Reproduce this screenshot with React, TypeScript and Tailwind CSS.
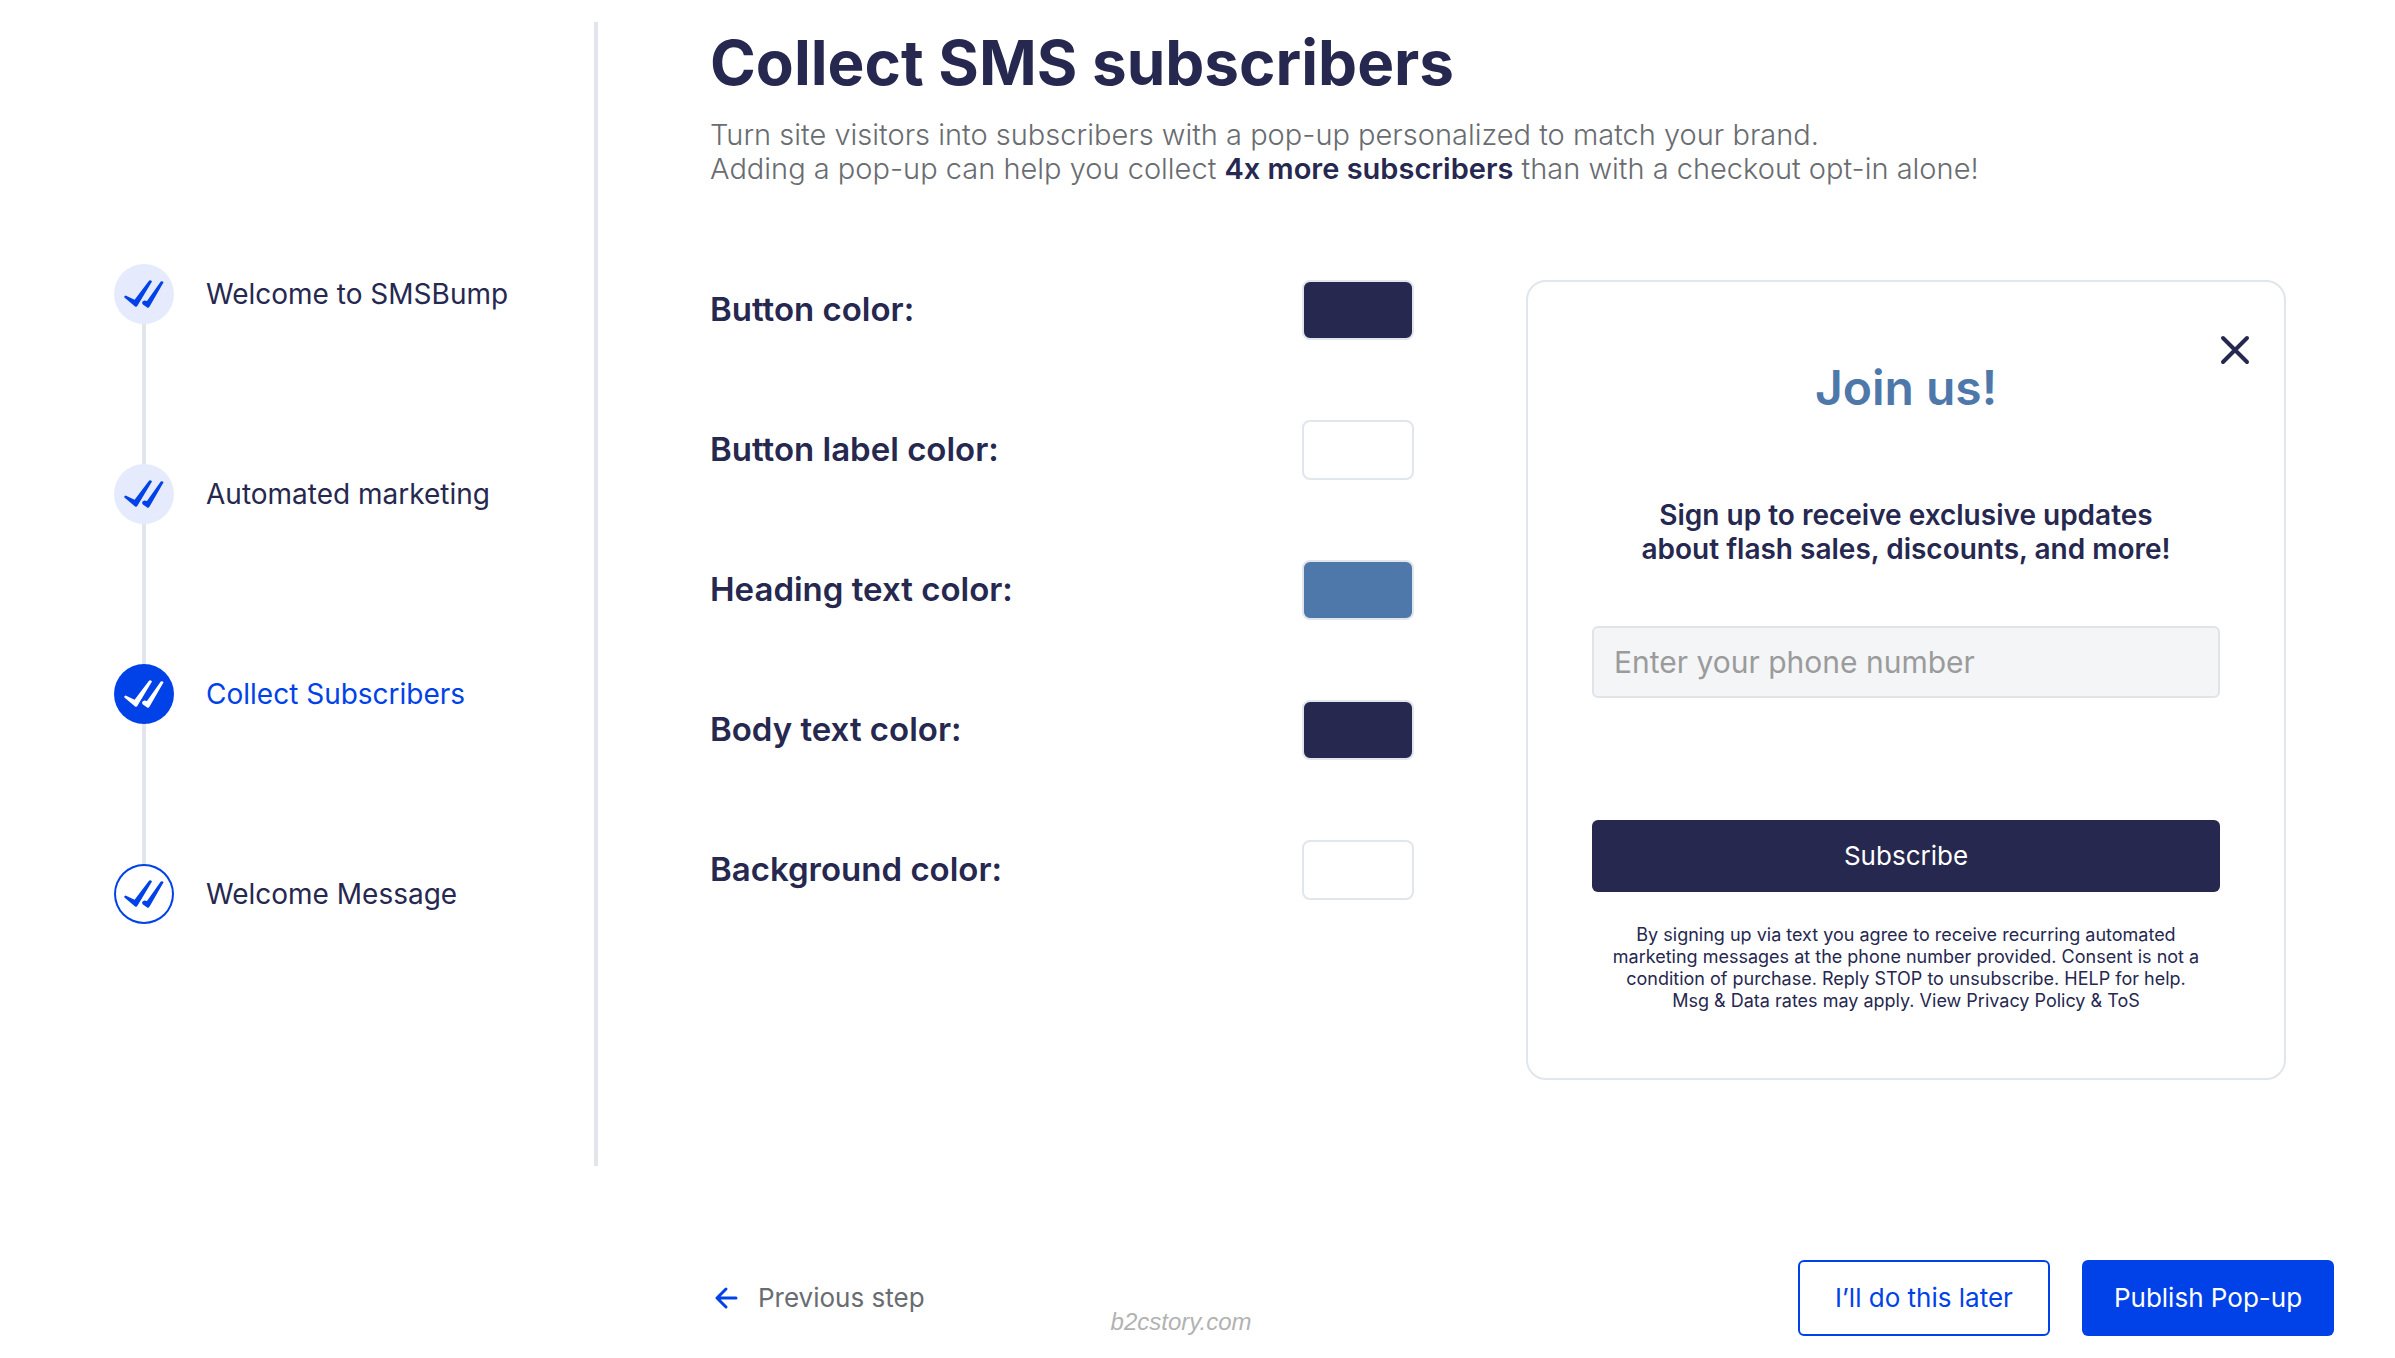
import React from "react";

const INTER = "font-['Inter',sans-serif]";

function DoubleCheck() {
  return (
    <svg viewBox="0 0 60 60" className="size-15" fill="currentColor" aria-hidden="true">
      <path d="M10.400 33.600 Q9.600 32.200 11.600 31.600 L20.600 35.800 L35 16.800 Q36.400 15.700 38 17.400 L23.600 41.600 Q22.400 43.600 20.800 42.200 Z" />
      <path d="M28 38.600 Q28.400 36.600 30.600 36.400 L33 37 L46.800 17.600 Q48.200 16.600 49.600 18.200 L35.600 42.600 Q34.400 44.600 32.800 43.200 L28.600 40.200 Z" />
    </svg>
  );
}

type StepState = "done" | "current" | "todo";

const steps: { label: string; state: StepState }[] = [
  { label: "Welcome to SMSBump", state: "done" },
  { label: "Automated marketing", state: "done" },
  { label: "Collect Subscribers", state: "current" },
  { label: "Welcome Message", state: "todo" },
];

const circle: Record<StepState, string> = {
  done: "bg-[#e5ebfc] text-[#0042e8]",
  current: "bg-[#0042e8] text-white",
  todo: "bg-white text-[#0042e8] ring-2 ring-inset ring-[#0042e8]",
};

function Stepper() {
  return (
    <ol className="pl-[114px] pt-[264px]">
      {steps.map((s, i) => (
        <li key={s.label} className="flex gap-8" aria-current={s.state === "current" ? "step" : undefined}>
          <div className="flex flex-col items-center">
            <span className={"flex size-15 items-center justify-center rounded-full " + circle[s.state]}>
              <DoubleCheck />
            </span>
            {i < steps.length - 1 && <span className="h-[140px] w-1 bg-[#e1e5ec]" />}
          </div>
          <span className={"text-[28px] leading-[60px] whitespace-nowrap " + (s.state === "current" ? "text-[#0042e8]" : "text-[#26284f]")}>
            {s.label}
          </span>
        </li>
      ))}
    </ol>
  );
}

const colors = [
  { id: "button", label: "Button color:", value: "bg-[#26284f]" },
  { id: "label", label: "Button label color:", value: "bg-white" },
  { id: "heading", label: "Heading text color:", value: "bg-[#4e78aa]" },
  { id: "body", label: "Body text color:", value: "bg-[#26284f]" },
  { id: "background", label: "Background color:", value: "bg-white" },
];

function ColorSettings() {
  return (
    <div className="flex w-[704px] shrink-0 flex-col gap-20">
      {colors.map((c) => (
        <div key={c.id} className="flex items-center justify-between">
          <label htmlFor={c.id} className="pb-0.5 text-[33px] leading-[58px] font-semibold">
            {c.label}
          </label>
          <button id={c.id} type="button" className={"h-[60px] w-28 rounded-lg border-2 border-[#e1e5ec] " + c.value} />
        </div>
      ))}
    </div>
  );
}

function PopupPreview() {
  return (
    <section className="relative grow rounded-[20px] border-2 border-[#e1e5ec] px-16 pt-[70px] pb-[66px] text-center">
      <button type="button" aria-label="Close" className="absolute top-12 right-[29px]">
        <svg viewBox="0 0 40 40" className="size-10" fill="none" stroke="currentColor" strokeWidth="4" strokeLinecap="round" aria-hidden="true">
          <path d="M8 8 L32 32 M32 8 L8 32" />
        </svg>
      </button>
      <h2 className="text-[48px] leading-[72px] font-semibold text-[#4e78aa]">Join us!</h2>
      <p className="mt-[74px] text-[28px] leading-[34px] font-semibold">
        Sign up to receive exclusive updates
        <br />
        about flash sales, discounts, and more!
      </p>
      <input
        type="tel"
        aria-label="Phone number"
        placeholder="Enter your phone number"
        className="mt-[60px] block h-[72px] w-full rounded-md border-2 border-[#e0e4e8] bg-[#f4f5f7] px-5 text-[30px] placeholder:text-[#9b9b9b]"
      />
      <button type="button" className="mt-[122px] block h-[72px] w-full rounded-md bg-[#26284f] pb-0.5 text-[26px] text-white">
        Subscribe
      </button>
      <p className="mt-8 text-[18px] leading-[22px]">
        By signing up via text you agree to receive recurring automated
        <br />
        marketing messages at the phone number provided. Consent is not a
        <br />
        condition of purchase. Reply STOP to unsubscribe. HELP for help.
        <br />
        Msg &amp; Data rates may apply. View Privacy Policy &amp; ToS
      </p>
    </section>
  );
}

export default function App() {
  return (
    <div className={"bg-white text-[#26284f] " + INTER}>
      <div className="flex min-h-[1166px]">
        <aside className="w-[594px] shrink-0">
          <Stepper />
        </aside>
        <div className="mt-[22px] w-1 shrink-0 bg-[#e1e5ec]" />
        <main className="grow pt-[27px] pr-[109px] pl-28">
          <h1 className="text-[62px] leading-[72px] font-bold">Collect SMS subscribers</h1>
          <p className="mt-[19px] text-[29px] leading-[34px] font-[350] whitespace-nowrap text-[#696c70]">
            Turn site visitors into subscribers with a pop-up personalized to match your brand.
            <br />
            Adding a pop-up can help you collect <strong className="font-semibold text-[#26284f]">4x more subscribers</strong> than with a checkout
            opt-in alone!
          </p>
          <div className="mt-[94px] flex items-start gap-28">
            <ColorSettings />
            <PopupPreview />
          </div>
        </main>
      </div>
      <footer className="flex items-start pt-[94px] pr-[61px] pl-[710px] text-[26px]">
        <button type="button" className="flex h-[76px] items-center gap-4 text-[#696c70]">
          <svg viewBox="0 0 32 32" className="size-8" fill="none" stroke="#0042e8" strokeWidth="3" strokeLinecap="round" strokeLinejoin="round" aria-hidden="true">
            <path d="M26 16 H7 M16 7 L7 16 L16 25" />
          </svg>
          <span className="pb-0.5">Previous step</span>
        </button>
        <span className="mt-[46px] ml-[186px] font-['Liberation_Sans',sans-serif] text-[24px] leading-8 text-[#b2b2b2] italic">b2cstory.com</span>
        <div className="ml-auto flex gap-8">
          <button type="button" className="h-[76px] w-[252px] rounded-md border-2 border-[#0042e8] pb-0.5 text-[#0042e8]">
            I’ll do this later
          </button>
          <button type="button" className="h-[76px] w-[252px] rounded-md bg-[#0042e8] pb-0.5 text-white">
            Publish Pop-up
          </button>
        </div>
      </footer>
    </div>
  );
}
